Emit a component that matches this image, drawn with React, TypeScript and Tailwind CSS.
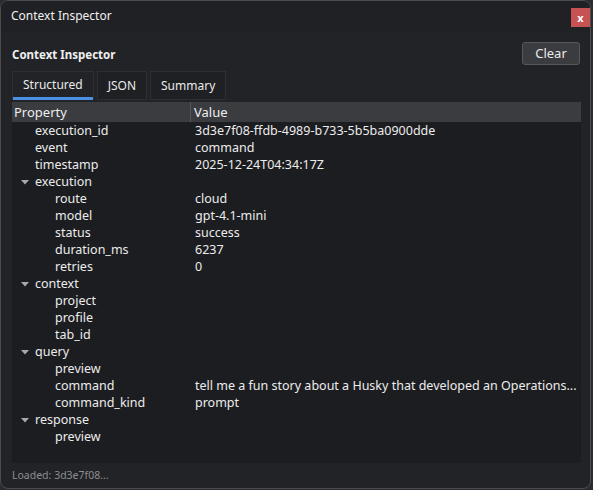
import React from 'react';

type Row = { key: string; value?: string; depth: 0 | 1; group?: boolean };

const rows: Row[] = [
  { key: 'execution_id', value: '3d3e7f08-ffdb-4989-b733-5b5ba0900dde', depth: 0 },
  { key: 'event', value: 'command', depth: 0 },
  { key: 'timestamp', value: '2025-12-24T04:34:17Z', depth: 0 },
  { key: 'execution', depth: 0, group: true },
  { key: 'route', value: 'cloud', depth: 1 },
  { key: 'model', value: 'gpt-4.1-mini', depth: 1 },
  { key: 'status', value: 'success', depth: 1 },
  { key: 'duration_ms', value: '6237', depth: 1 },
  { key: 'retries', value: '0', depth: 1 },
  { key: 'context', depth: 0, group: true },
  { key: 'project', depth: 1 },
  { key: 'profile', depth: 1 },
  { key: 'tab_id', depth: 1 },
  { key: 'query', depth: 0, group: true },
  { key: 'preview', depth: 1 },
  { key: 'command', value: 'tell me a fun story about a Husky that developed an Operations...', depth: 1 },
  { key: 'command_kind', value: 'prompt', depth: 1 },
  { key: 'response', depth: 0, group: true },
  { key: 'preview', depth: 1 },
];

const tabs = ['Structured', 'JSON', 'Summary'];

export default function App() {
  return (
    <div
      className="w-[593px] h-[490px] bg-[#2a2b2e] text-[#e6e6e6] text-[12.5px] leading-none"
      style={{ fontFamily: '"Noto Sans", "Open Sans", sans-serif' }}
    >
      <div className="w-[591px] h-[489px] rounded-lg border border-[#4b4c50] bg-[#222326] flex flex-col overflow-hidden">
        {/* title bar */}
        <div className="h-[31px] flex items-start justify-between bg-[#202124] shrink-0">
          <span className="pl-[10px] pt-[9px] text-[12px] text-[#f0f0f0]">Context Inspector</span>
          <button className="mt-[7px] w-[19px] h-[19px] bg-[#c75252] text-white text-[11px] font-bold flex items-center justify-center">
            x
          </button>
        </div>

        <div className="flex-1 flex flex-col pl-[11px] pr-[10px] pt-[10px]">
          {/* header */}
          <div className="flex items-center justify-between h-[23px]">
            <span className="font-bold text-[11.5px] text-[#f0f0f0] pt-[2px]">Context Inspector</span>
            <button className="w-[58px] h-[23px] rounded-[3px] border border-[#55575c] bg-[#3a3c40] text-[13px] text-[#eaeaea]">
              Clear
            </button>
          </div>

          {/* tabs */}
          <div className="flex gap-[3px] mt-[6px]">
            {tabs.map((t, i) => (
              <div
                key={t}
                className={
                  i === 0
                    ? 'h-[29px] px-[10px] flex flex-col justify-between border border-[#2e2f33] border-b-0 bg-[#222326]'
                    : 'h-[29px] px-[10px] flex flex-col justify-center border border-[#2e2f33] bg-[#1f2023]'
                }
              >
                {i === 0 ? (
                  <>
                    <span className="pt-[7px] text-[12px] text-[#eaeaea]">{t}</span>
                    <span className="h-[3px] -mx-[10px] bg-[#4a90e2]" />
                  </>
                ) : (
                  <span className="text-[12px] text-[#eaeaea]">{t}</span>
                )}
              </div>
            ))}
          </div>

          {/* table */}
          <div className="mt-[2px] w-[569px] h-[361px] bg-[#1c1d20] flex flex-col">
            <div className="h-[20px] bg-[#3b3c40] flex text-[13px] text-[#eeeeee]">
              <div className="w-[179px] pl-[2px] flex items-center border-r border-[#55575c]">Property</div>
              <div className="pl-[3px] flex items-center">Value</div>
            </div>
            <div className="pt-[1px]">
              {rows.map((r, i) => (
                <div key={i} className="h-[17px] flex items-center text-[#ececec]">
                  <div className="w-[180px] flex items-center shrink-0">
                    {r.depth === 0 ? (
                      <>
                        <span className="w-[23px] flex justify-center pl-[2px]">
                          {r.group && (
                            <svg width="8" height="5" viewBox="0 0 8 5">
                              <path d="M0 0 L8 0 L4 4.5 Z" fill="#a8a9ad" />
                            </svg>
                          )}
                        </span>
                        <span>{r.key}</span>
                      </>
                    ) : (
                      <span className="pl-[43px]">{r.key}</span>
                    )}
                  </div>
                  <div className="pl-[3px] whitespace-nowrap">{r.value}</div>
                </div>
              ))}
            </div>
          </div>

          {/* footer */}
          <div className="mt-[7px] text-[10.5px] text-[#8d8e92]">Loaded: 3d3e7f08...</div>
        </div>
      </div>
    </div>
  );
}
